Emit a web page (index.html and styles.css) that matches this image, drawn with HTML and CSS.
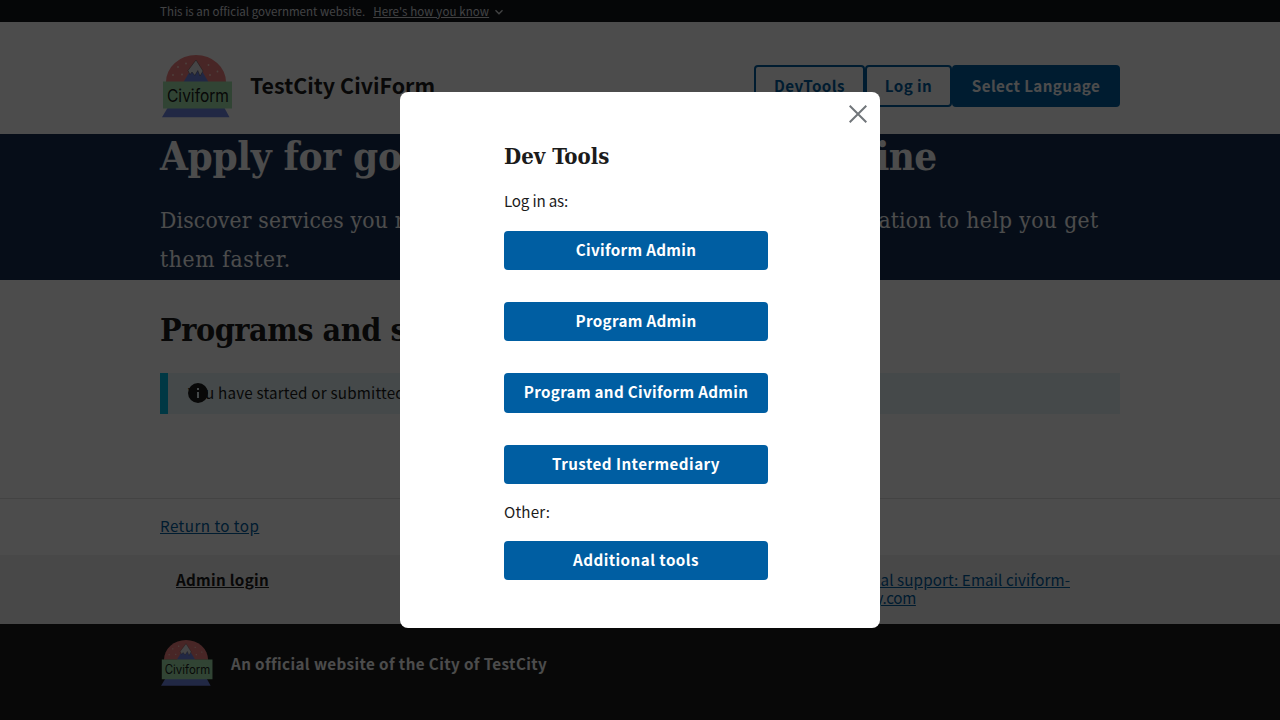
FILE: index.html
```html
<!DOCTYPE html>
<html lang="en">
<head>
<meta charset="utf-8">
<title>TestCity CiviForm</title>
<link rel="stylesheet" href="styles.css">
</head>
<body>
<div class="banner"><div class="wrap banner-row"><span>This is an official government website.</span><a class="banner-link">Here's how you know</a><svg class="chevron" viewBox="0 0 10 10"><path d="M1.500 3.200L5 6.700l3.500-3.500" fill="none" stroke="#dcdee0" stroke-width="1.400"/></svg></div></div>
<header class="header"><div class="wrap header-row">
  <svg class="logo" viewBox="0 0 72 64">
    <path d="M4 27a30 27 0 0 1 60 0z" fill="#f08080"/>
    <path d="M21.500 27L34 6l12.500 21z" fill="#7186e4"/>
    <path d="M34 5l7 11-3 5-2.200-5.500-3 5-2.800-3.500-2 2.500-2-4z" fill="#e8e8ec" stroke="#333" stroke-width=".4"/>
    <g fill="#ffd8cc"><circle cx="16" cy="12" r=".9"/><circle cx="24" cy="8.500" r=".9"/><circle cx="11" cy="20" r=".9"/><circle cx="20" cy="19.500" r=".9"/><circle cx="46.500" cy="10" r=".9"/><circle cx="55.500" cy="16.500" r=".9"/><circle cx="48" cy="20" r=".9"/></g>
    <path d="M5.500 53h57l5 9.300H0z" fill="#7186e4"/>
    <path d="M1 26.500h69v27H1z" fill="#a4e5ad"/>
    <text x="5" y="46.500" class="logo-text" textLength="62" lengthAdjust="spacingAndGlyphs">Civiform</text>
  </svg>
  <span class="site-title">TestCity CiviForm</span>
  <nav class="nav"><a class="btn outline dev">DevTools</a><a class="btn outline login">Log in</a><a class="btn solid lang">Select Language</a></nav>
</div></header>
<section class="hero"><div class="wrap">
  <h1 class="hero-title"><span class="title-lead">Apply for go</span>vernment assistance online</h1>
  <p class="hero-text">Discover services you may be eligible for, and then save your information <span class="text-tail">to help you get</span><br><span class="text-last">them faster.</span></p>
</div></section>
<main class="wrap main">
  <h2 class="main-title">Programs and services</h2>
  <div class="alert"><svg class="info" viewBox="0 0 20 20"><circle cx="10" cy="10" r="10" fill="#1b1b1b"/><path d="M9 5h2v2H9zM9 9h2v6H9z" fill="#e7f6f8"/></svg>You have started or submitted all available programs</div>
</main>
<div class="return"><div class="wrap"><a class="link top">Return to top</a></div></div>
<div class="footer-links"><div class="wrap footer-row"><a class="admin">Admin login</a><a class="link support">For technical support: Email civiform-<br><span class="support-host">admin@city.com</span></a></div></div>
<footer class="footer"><div class="wrap identity">
  <svg class="logo small" viewBox="0 0 72 64">
    <path d="M4 27a30 27 0 0 1 60 0z" fill="#f08080"/>
    <path d="M21.500 27L34 6l12.500 21z" fill="#7186e4"/>
    <path d="M34 5l7 11-3 5-2.200-5.500-3 5-2.800-3.500-2 2.500-2-4z" fill="#e8e8ec" stroke="#333" stroke-width=".4"/>
    <g fill="#ffd8cc"><circle cx="16" cy="12" r=".9"/><circle cx="24" cy="8.500" r=".9"/><circle cx="11" cy="20" r=".9"/><circle cx="20" cy="19.500" r=".9"/><circle cx="46.500" cy="10" r=".9"/><circle cx="55.500" cy="16.500" r=".9"/><circle cx="48" cy="20" r=".9"/></g>
    <path d="M5.500 53h57l5 9.300H0z" fill="#7186e4"/>
    <path d="M1 26.500h69v27H1z" fill="#a4e5ad"/>
    <text x="5" y="46.500" class="logo-text" textLength="62" lengthAdjust="spacingAndGlyphs">Civiform</text>
  </svg>
  <span class="identity-text">An official website of the City of TestCity</span></div></footer>
<div class="overlay">
  <div class="modal" role="dialog">
    <svg class="close" viewBox="0 0 18 18"><path d="M.7.700l16.600 16.600M17.300.700L.7 17.300" stroke="#71767a" stroke-width="2"/></svg>
    <h2 class="modal-title">Dev Tools</h2>
    <p class="label">Log in as:</p>
    <div class="stack">
      <a class="action">Civiform Admin</a><a class="action">Program Admin</a><a class="action">Program and Civiform Admin</a><a class="action wide">Trusted Intermediary</a>
    </div>
    <p class="label other">Other:</p>
    <a class="action wide">Additional tools</a>
  </div>
</div>
</body>
</html>
```
FILE: styles.css
```css
* { box-sizing: border-box; }
body { margin: 0; height: 720px; overflow: hidden; background: #fff; color: #1b1b1b; font: 15.2px/18px "Noto Sans CJK SC", sans-serif; }
h1, h2, p { margin: 0; }
.wrap { width: 960px; margin: 0 auto; }
.banner { height: 22px; background: #111518; color: #dcdee0; font-size: 11.5px; line-height: 23px; letter-spacing: .03px; }
.banner-row { display: flex; align-items: flex-start; }
.banner-link { margin-left: 8px; text-decoration: underline; letter-spacing: .1px; }
.chevron { width: 10px; height: 10px; margin: 7px 0 0 5px; }
.header { height: 112px; padding-top: 33px; }
.header-row { display: flex; align-items: flex-start; }
.logo { width: 72px; height: 64px; margin-left: 2px; flex: none; overflow: visible; }
.logo-text { font: 17.500px Inter, sans-serif; fill: #1b1b1b; }
.site-title { margin: 15px 0 0 16px; font-size: 21.400px; line-height: 30px; font-weight: 700; letter-spacing: .03px; white-space: nowrap; }
.nav { display: flex; margin: 10px 0 0 auto; letter-spacing: .4px; }
.btn { height: 42px; line-height: 40px; border-radius: 4px; font-weight: 700; text-align: center; white-space: nowrap; }
.outline { color: #005ea2; box-shadow: inset 0 0 0 2px #005ea2; }
.solid { background: #005ea2; color: #fff; }
.dev { width: 111px; }
.login { width: 87px; }
.lang { width: 168px; }
.hero { height: 146px; background: #162e51; color: #fff; font-family: "DejaVu Serif Condensed", "DejaVu Serif", serif; white-space: nowrap; }
.hero-title { font-size: 40px; line-height: 44px; font-weight: 700; letter-spacing: -.7px; }
.title-lead { letter-spacing: -.32px; }
.hero-text { margin-top: 23px; font-size: 22.600px; line-height: 39px; letter-spacing: .2px; }
.text-tail { letter-spacing: .4px; }
.text-last { letter-spacing: .65px; }
.main { height: 218px; padding-top: 30px; }
.main-title { font: 700 32px/40px "DejaVu Serif Condensed", "DejaVu Serif", serif; letter-spacing: -.45px; }
.alert { position: relative; margin-top: 23px; height: 41px; line-height: 38px; padding-left: 20px; border-left: 8px solid #00bde3; background: #e7f6f8; letter-spacing: .2px; }
.info { position: absolute; left: 20px; top: 10px; width: 20px; height: 20px; }
.return { height: 57px; border-top: 1px solid #dfe1e2; padding-top: 17px; }
.link { color: #005ea2; text-decoration: underline; }
.top { letter-spacing: .45px; }
.footer-links { height: 69px; padding-top: 15px; background: #f0f0f0; }
.footer-row { display: flex; justify-content: space-between; }
.admin { margin-left: 16px; font-weight: 700; text-decoration: underline; letter-spacing: .3px; }
.support { margin-right: 50px; white-space: nowrap; letter-spacing: .1px; }
.support-host { letter-spacing: -.32px; }
.footer { height: 96px; background: #1b1b1b; color: #fff; padding-top: 16px; }
.identity { display: flex; align-items: flex-start; }
.small { width: 53px; height: 47px; margin: 0 1px 0 1px; }
.identity-text { margin: 14px 0 0 16px; font-weight: 700; letter-spacing: .4px; }
.overlay { position: fixed; inset: 0; display: flex; align-items: center; justify-content: center; background: rgba(0, 0, 0, .7); }
.modal { position: relative; width: 480px; height: 536px; padding: 50px 112px 0 104px; border-radius: 8px; background: #fff; }
.close { position: absolute; top: 13px; right: 13px; width: 18px; height: 18px; }
.modal-title { font: 700 22px/28px "DejaVu Serif Condensed", "DejaVu Serif", serif; }
.label { margin-top: 21px; margin-bottom: 21.600px; line-height: 18px; letter-spacing: -.2px; }
.stack { display: flex; flex-direction: column; gap: 32px; }
.action { display: block; height: 39.400px; line-height: 37px; border-radius: 4px; background: #005ea2; color: #fff; font-weight: 700; letter-spacing: .31px; text-align: center; white-space: nowrap; }
.wide { letter-spacing: .45px; }
.other { margin-top: 18px; margin-bottom: 20.400px; letter-spacing: .15px; }
```
